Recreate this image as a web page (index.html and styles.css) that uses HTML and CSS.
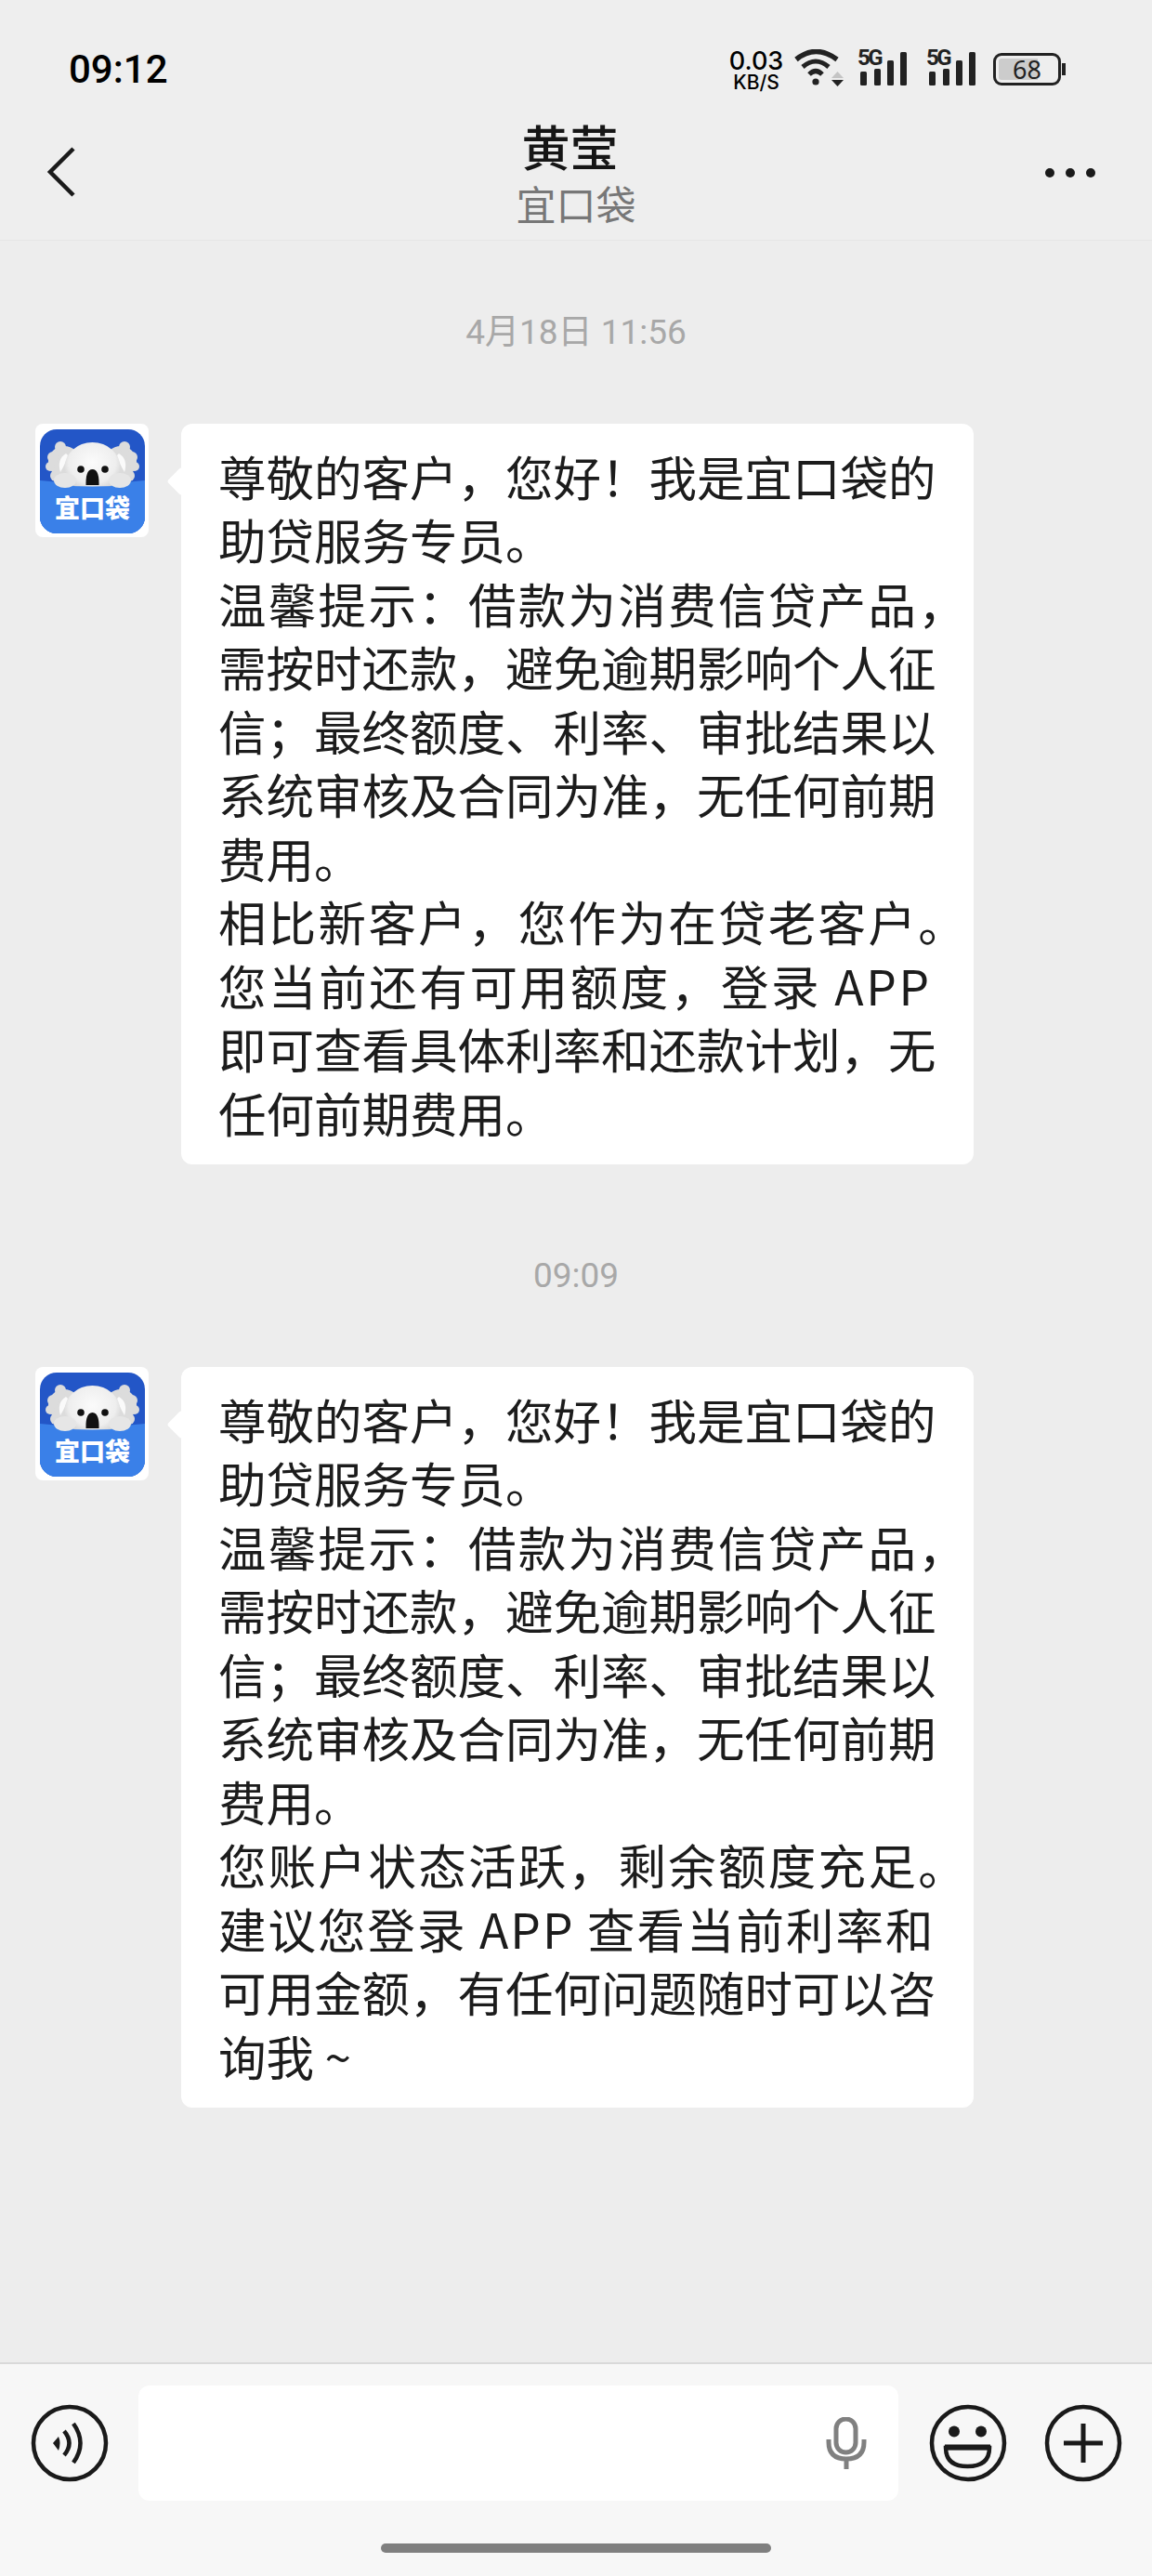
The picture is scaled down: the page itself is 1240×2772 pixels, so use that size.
FILE: index.html
```html
<!DOCTYPE html>
<html lang="zh-CN">
<head>
  <meta charset="UTF-8" />
  <meta name="viewport" content="width=device-width, initial-scale=1.0"/>
  <title>宜口袋</title>
  <link rel="stylesheet" href="styles.css">
</head>
<body>
  <!-- shared koala artwork for both avatars -->
  <svg class="defs" width="0" height="0">
    <defs>
      <radialGradient id="fur" cx="50%" cy="40%" r="60%">
        <stop offset="0%" stop-color="#fbfbfb"/>
        <stop offset="70%" stop-color="#eeeeee"/>
        <stop offset="100%" stop-color="#cfcfcf"/>
      </radialGradient>
      <symbol id="koala" viewBox="0 0 113 112">
        <rect width="113" height="112" fill="#2356c7"/>
        <path d="M0 55 Q56 62 113 55 V112 H0 Z" fill="#3a80e8"/>
        <g fill="#dcdcdc">
          <circle cx="26" cy="35" r="17"/>
          <circle cx="14" cy="30" r="6"/>
          <circle cx="11" cy="40" r="5"/>
          <circle cx="17" cy="50" r="6"/>
          <circle cx="22" cy="19" r="6"/>
          <circle cx="87" cy="35" r="17"/>
          <circle cx="99" cy="30" r="6"/>
          <circle cx="102" cy="40" r="5"/>
          <circle cx="96" cy="50" r="6"/>
          <circle cx="91" cy="19" r="6"/>
        </g>
        <path d="M28 26 Q18 32 22 46 Q28 36 30 28 Z" fill="#fafafa"/>
        <path d="M85 26 Q95 32 91 46 Q85 36 83 28 Z" fill="#fafafa"/>
        <ellipse cx="56.5" cy="41" rx="30" ry="27" fill="url(#fur)"/>
        <circle cx="44" cy="43" r="3.8" fill="#111"/>
        <circle cx="70" cy="43" r="3.8" fill="#111"/>
        <path d="M49.5 60 Q49 43 56.5 43 Q64 43 63.5 60 Z" fill="#111"/>
        <path d="M0 58 Q56 65 113 58 V112 H0 Z" fill="#3a80e8"/>
        <g fill="#e6e6e6">
          <ellipse cx="27" cy="55" rx="12" ry="8"/>
          <ellipse cx="86" cy="55" rx="12" ry="8"/>
        </g>
      </symbol>
    </defs>
  </svg>

  <div class="phone">
    <div class="top">
      <div class="status">
        <span class="clock">09:12</span>
        <div class="status-icons">
          <div class="speed"><span class="speed-num">0.03</span><span class="speed-unit">KB/S</span></div>
          <svg class="wifi" width="54" height="42" viewBox="0 0 54 42">
            <path d="M2 11 Q23 -6 46 11" fill="none" stroke="#222" stroke-width="5.5"/>
            <path d="M9 19 Q23 7 37 19" fill="none" stroke="#222" stroke-width="5"/>
            <path d="M16 27 Q23 20 30 27" fill="none" stroke="#222" stroke-width="5"/>
            <circle cx="23" cy="35" r="3.6" fill="#222"/>
            <path d="M40 31 L46.5 24 L53 31 Z" fill="#c4c4c4"/>
            <path d="M40 33 L53 33 L46.5 40 Z" fill="#222"/>
          </svg>
          <div class="signal">
            <span class="net">5G</span>
            <svg width="50" height="36" viewBox="0 0 50 36">
              <rect x="0" y="21" width="7" height="15" rx="1.5" fill="#222"/>
              <rect x="15" y="18" width="7" height="18" rx="1.5" fill="#222"/>
              <rect x="29" y="9" width="7" height="27" rx="1.5" fill="#222"/>
              <rect x="43" y="0" width="7" height="36" rx="1.5" fill="#222"/>
            </svg>
          </div>
          <div class="signal">
            <span class="net">5G</span>
            <svg width="50" height="36" viewBox="0 0 50 36">
              <rect x="0" y="21" width="7" height="15" rx="1.5" fill="#222"/>
              <rect x="15" y="18" width="7" height="18" rx="1.5" fill="#222"/>
              <rect x="29" y="9" width="7" height="27" rx="1.5" fill="#222"/>
              <rect x="43" y="0" width="7" height="36" rx="1.5" fill="#222"/>
            </svg>
          </div>
          <div class="battery">
            <div class="battery-body"><div class="battery-fill"></div><span class="battery-num">68</span></div>
            <div class="battery-nub"></div>
          </div>
        </div>
      </div>
      <div class="nav">
        <svg class="back" width="32" height="56" viewBox="0 0 32 56">
          <path d="M29 3 L4 28 L29 53" fill="none" stroke="#1a1a1a" stroke-width="4.5"/>
        </svg>
        <div class="nav-title">
          <div class="name">黄莹</div>
          <div class="org">宜口袋</div>
        </div>
        <div class="more"><i></i><i></i><i></i></div>
      </div>
    </div>

    <div class="chat">
      <div class="time">4月18日 11:56</div>
      <div class="msg">
        <div class="avatar">
          <div class="logo">
            <svg class="koala" width="113" height="112"><use href="#koala"/></svg>
            <div class="logo-text">宜口袋</div>
          </div>
        </div>
        <div class="bubble">
          <div>尊敬的客户，您好！我是宜口袋的</div>
          <div>助贷服务专员。</div>
          <div class="wide">温馨提示：借款为消费信贷产品，</div>
          <div>需按时还款，避免逾期影响个人征</div>
          <div>信；最终额度、利率、审批结果以</div>
          <div>系统审核及合同为准，无任何前期</div>
          <div>费用。</div>
          <div class="wide">相比新客户，您作为在贷老客户。</div>
          <div class="wide-app">您当前还有可用额度，登录 APP</div>
          <div>即可查看具体利率和还款计划，无</div>
          <div>任何前期费用。</div>
        </div>
      </div>

      <div class="time">09:09</div>
      <div class="msg">
        <div class="avatar">
          <div class="logo">
            <svg class="koala" width="113" height="112"><use href="#koala"/></svg>
            <div class="logo-text">宜口袋</div>
          </div>
        </div>
        <div class="bubble">
          <div>尊敬的客户，您好！我是宜口袋的</div>
          <div>助贷服务专员。</div>
          <div class="wide">温馨提示：借款为消费信贷产品，</div>
          <div>需按时还款，避免逾期影响个人征</div>
          <div>信；最终额度、利率、审批结果以</div>
          <div>系统审核及合同为准，无任何前期</div>
          <div>费用。</div>
          <div class="wide">您账户状态活跃，剩余额度充足。</div>
          <div class="wide-mid">建议您登录 APP 查看当前利率和</div>
          <div>可用金额，有任何问题随时可以咨</div>
          <div>询我 ~</div>
        </div>
      </div>
    </div>

    <div class="bottom">
      <div class="input-row">
        <svg width="84" height="84" viewBox="0 0 84 84">
          <circle cx="42" cy="42" r="39" fill="none" stroke="#1a1a1a" stroke-width="4.5"/>
          <path d="M24 42 L30 35 Q33 42 30 50 Z" fill="#1a1a1a"/>
          <path d="M36 29 Q47 42 36 55" fill="none" stroke="#1a1a1a" stroke-width="4.5"/>
          <path d="M46 21 Q61 42 46 63" fill="none" stroke="#1a1a1a" stroke-width="4.5"/>
        </svg>
        <div class="input">
          <svg width="44" height="56" viewBox="0 0 44 56">
            <rect x="11" y="2" width="21" height="36" rx="10.5" fill="none" stroke="#808080" stroke-width="5"/>
            <path d="M3 24 V27 Q3 45 22 45 Q41 45 41 27 V24" fill="none" stroke="#808080" stroke-width="5"/>
            <path d="M22 45 V56" stroke="#808080" stroke-width="5"/>
          </svg>
        </div>
        <svg class="smile" width="84" height="84" viewBox="0 0 84 84">
          <circle cx="42" cy="42" r="39" fill="none" stroke="#1a1a1a" stroke-width="4.5"/>
          <circle cx="27" cy="29.5" r="6" fill="#1a1a1a"/>
          <circle cx="56" cy="29.5" r="6" fill="#1a1a1a"/>
          <path d="M18 47 H65 Q65 67 41.5 67 Q18 67 18 47 Z" fill="none" stroke="#1a1a1a" stroke-width="4.5"/>
          <path d="M17 46.5 H66" stroke="#1a1a1a" stroke-width="6"/>
        </svg>
        <svg class="plus" width="84" height="84" viewBox="0 0 84 84">
          <circle cx="42" cy="42" r="39" fill="none" stroke="#1a1a1a" stroke-width="4.5"/>
          <path d="M21 42 H63 M42 21 V63" stroke="#1a1a1a" stroke-width="5"/>
        </svg>
      </div>
      <div class="home-bar"></div>
    </div>
  </div>
</body>
</html>
```

FILE: styles.css
```css
* {
  box-sizing: border-box;
}
body {
  margin: 0;
  font-family: "Noto Sans CJK SC", sans-serif;
  background: #ededed;
}
.defs {
  position: absolute;
}
.phone {
  width: 1240px;
  height: 2772px;
  display: flex;
  flex-direction: column;
  overflow: hidden;
}
.top {
  height: 259px;
  background: #eeeeee;
  border-bottom: 1px solid #e6e6e6;
}
.status {
  height: 134px;
  padding: 50px 0 0 74px;
  display: flex;
  justify-content: space-between;
  align-items: flex-start;
}
.clock {
  font-family: Roboto, sans-serif;
  font-size: 42px;
  font-weight: 500;
  line-height: 50px;
  color: #000;
}
.status-icons {
  display: flex;
  align-items: flex-start;
  margin-top: 3px;
  margin-right: 93px;
}
.speed {
  width: 58px;
  display: flex;
  flex-direction: column;
  align-items: center;
  font-family: Inter, sans-serif;
  font-weight: 500;
  color: #000;
}
.speed-num {
  font-size: 27px;
  line-height: 26px;
}
.speed-unit {
  font-size: 21px;
  line-height: 20px;
}
.wifi {
  margin-left: 12px;
}
.signal {
  position: relative;
  width: 50px;
  height: 39px;
  margin-left: 17px;
  display: flex;
  align-items: flex-end;
}
.signal svg {
  display: block;
}
.signal + .signal {
  margin-left: 24px;
}
.net {
  position: absolute;
  left: -3px;
  top: -3px;
  font-family: Roboto, sans-serif;
  font-size: 24px;
  font-weight: 700;
  line-height: 24px;
  letter-spacing: -2.5px;
  color: #222;
}
.battery {
  margin-left: 19px;
  margin-top: 4px;
  display: flex;
  align-items: center;
}
.battery-body {
  position: relative;
  width: 73px;
  height: 35px;
  border: 3px solid #222;
  border-radius: 9px;
  display: flex;
  align-items: center;
  justify-content: center;
}
.battery-fill {
  position: absolute;
  left: 3px;
  top: 3px;
  bottom: 3px;
  width: 42px;
  background: #cccccc;
  border-radius: 3px 0 0 3px;
}
.battery-num {
  position: relative;
  font-family: "Noto Sans", sans-serif;
  font-size: 27px;
  line-height: 29px;
  color: #222;
}
.battery-nub {
  width: 4px;
  height: 13px;
  margin-left: 1px;
  background: #222;
}
.nav {
  position: relative;
  height: 124px;
  display: flex;
  justify-content: center;
}
.back {
  position: absolute;
  left: 50px;
  top: 23px;
}
.nav-title {
  text-align: center;
  margin-top: -3px;
}
.name {
  padding-right: 13px;
  font-size: 52px;
  font-weight: 500;
  line-height: 52px;
  color: #161616;
}
.org {
  margin-top: 4px;
  font-size: 43px;
  line-height: 62px;
  color: #777;
}
.more {
  position: absolute;
  left: 1125px;
  top: 47px;
  display: flex;
  gap: 12px;
}
.more i {
  width: 10px;
  height: 10px;
  border-radius: 50%;
  background: #1a1a1a;
}
.chat {
  flex: 1;
  padding-top: 73px;
}
.time {
  height: 48px;
  padding-top: 2px;
  text-align: center;
  font-family: Roboto, "Noto Sans CJK SC", sans-serif;
  font-size: 37px;
  line-height: 48px;
  color: #a8a8a8;
}
.msg {
  display: flex;
  margin: 76px 0 94px 38px;
}
.avatar {
  width: 122px;
  height: 122px;
  padding: 6px 4px 4px 5px;
  background: #fff;
  border-radius: 8px;
}
.logo {
  position: relative;
  width: 113px;
  height: 112px;
  border-radius: 18px;
  overflow: hidden;
}
.koala {
  display: block;
}
.logo-text {
  position: absolute;
  left: 0;
  right: 0;
  top: 67px;
  text-align: center;
  font-size: 27px;
  font-weight: 900;
  line-height: 34px;
  color: #fff;
}
.bubble {
  position: relative;
  width: 853px;
  margin-left: 35px;
  padding: 22px 0 22px 40px;
  background: #fff;
  border-radius: 12px;
  font-size: 51.5px;
  line-height: 68.45px;
  color: #1c1c1c;
  white-space: nowrap;
}
.bubble::before {
  content: "";
  position: absolute;
  left: -11px;
  top: 51px;
  width: 22px;
  height: 22px;
  background: #fff;
  transform: rotate(45deg);
  border-radius: 3px;
}
.wide {
  letter-spacing: 2.3px;
}
.wide-app {
  letter-spacing: 2.6px;
}
.wide-mid {
  letter-spacing: 2px;
}
.bottom {
  height: 230px;
  background: #f7f7f7;
  border-top: 2px solid #d9d9d9;
}
.input-row {
  display: flex;
  align-items: center;
  padding: 23px 0 0 33px;
}
.input {
  width: 818px;
  height: 124px;
  margin-left: 32px;
  padding-right: 34px;
  background: #fff;
  border-radius: 12px;
  display: flex;
  align-items: center;
  justify-content: flex-end;
}
.smile {
  margin-left: 33px;
}
.plus {
  margin-left: 40px;
}
.home-bar {
  width: 420px;
  height: 10px;
  margin: 46px auto 0;
  background: #7f7f7f;
  border-radius: 5px;
}
```
